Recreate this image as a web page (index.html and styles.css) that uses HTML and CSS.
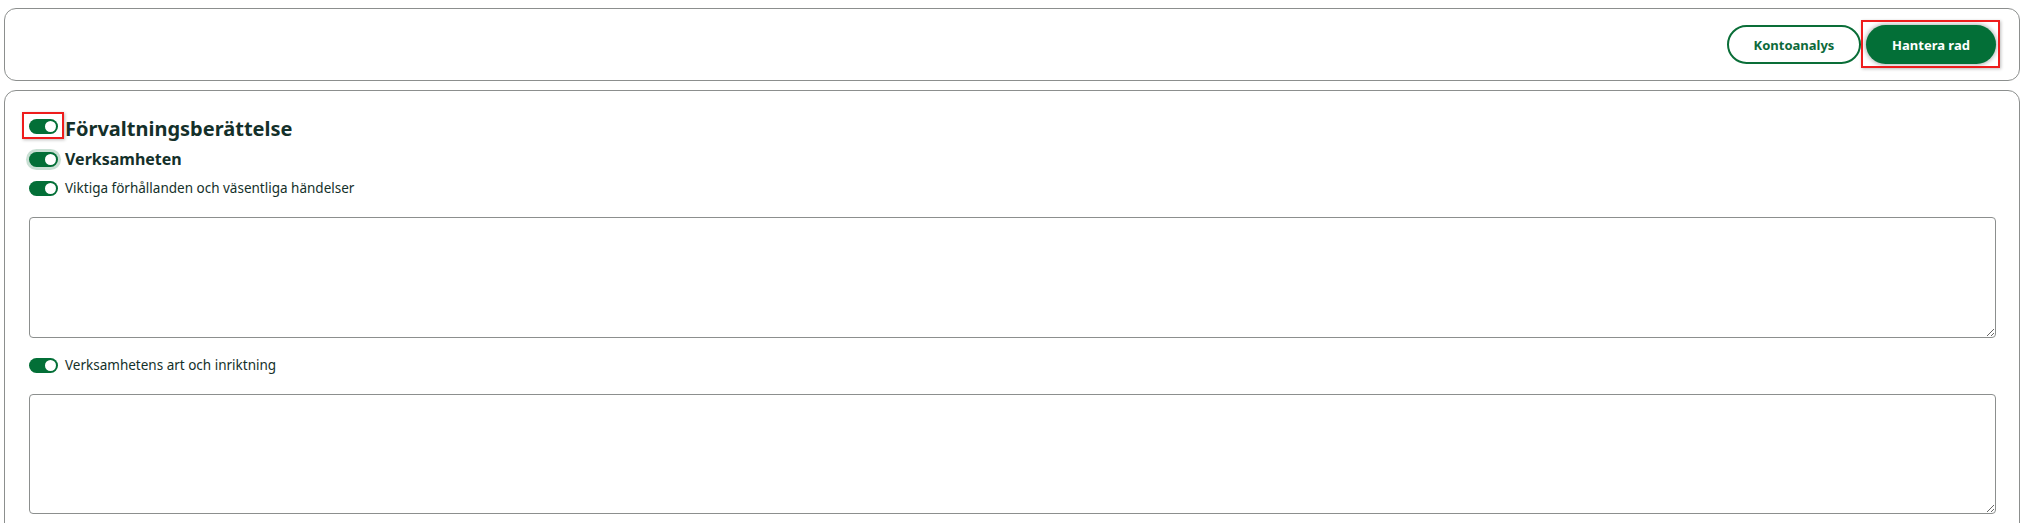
FILE: index.html
```html
<!DOCTYPE html>
<html lang="sv">
<head>
<meta charset="utf-8">
<title>Förvaltningsberättelse</title>
<link rel="stylesheet" href="styles.css">
</head>
<body>
  <div class="toolbar card">
    <button class="btn btn-outline">Kontoanalys</button>
    <button class="btn btn-primary marked-btn">Hantera rad</button>
  </div>
  <div class="content card">
    <div class="row row-h1">
      <span class="toggle marked-toggle"><span class="knob"></span></span>
      <h1 class="title">Förvaltningsberättelse</h1>
    </div>
    <div class="row row-h2">
      <span class="toggle focus"><span class="knob"></span></span>
      <h2 class="subtitle">Verksamheten</h2>
    </div>
    <div class="row row-item">
      <span class="toggle"><span class="knob"></span></span>
      <span class="label">Viktiga förhållanden och väsentliga händelser</span>
    </div>
    <textarea class="area"></textarea>
    <div class="row row-item row-gap">
      <span class="toggle"><span class="knob"></span></span>
      <span class="label">Verksamhetens art och inriktning</span>
    </div>
    <textarea class="area area-2"></textarea>
  </div>
</body>
</html>
```

FILE: styles.css
```css
* { box-sizing: border-box; }
html, body { margin: 0; background: #fff; }
body {
  padding: 8px 6px 0 4px;
  font-family: "Noto Sans", "Open Sans", sans-serif;
  color: #14302a;
  height: 523px;
  overflow: hidden;
}
.card {
  border: 1px solid #8c8f8e;
  border-radius: 12px;
  background: #fff;
}
.toolbar {
  height: 73px;
  display: flex;
  align-items: center;
  justify-content: flex-end;
  gap: 5px;
  padding-right: 23px;
}
.btn {
  height: 39px;
  border-radius: 20px;
  font-family: inherit;
  font-weight: 700;
  font-size: 13px;
  cursor: pointer;
  padding: 0;
}
.btn-outline {
  width: 134px;
  background: #fff;
  color: #0c6a3a;
  border: 2px solid #0a6e38;
}
.btn-primary {
  width: 130px;
  background: #036f37;
  color: #fff;
  border: none;
}
.marked-btn {
  position: relative;
  box-shadow: 0 0 4px 1px rgba(0,0,0,0.3);
}
.marked-btn::after {
  content: "";
  position: absolute;
  left: -5px;
  right: -4px;
  top: -5px;
  bottom: -4px;
  border: 2px solid #ee1c1c;
  box-shadow: 1px 1px 3px rgba(0,0,0,0.25);
}
.content {
  margin-top: 9px;
  height: 600px;
  padding: 22px 23px 0 24px;
}
.row {
  display: flex;
  align-items: center;
  gap: 7px;
}
.toggle {
  flex: none;
  position: relative;
  width: 29px;
  height: 15px;
  border-radius: 8px;
  background: #036f37;
  display: inline-block;
}
.knob {
  position: absolute;
  right: 2px;
  top: 2px;
  width: 11px;
  height: 11px;
  border-radius: 50%;
  background: #fff;
}
.marked-toggle::after {
  content: "";
  position: absolute;
  left: -7px;
  right: -6px;
  top: -7px;
  bottom: -5px;
  border: 2px solid #ee1c1c;
  box-shadow: 1px 1px 3px rgba(0,0,0,0.25);
}
.focus {
  box-shadow: 0 0 0 3px rgba(3,111,55,0.22);
}
.title {
  margin: 5px 0 0;
  font-size: 20px;
  font-weight: 700;
  line-height: 26px;
}
.row-h1 { height: 26px; }
.row-h2 { margin-top: 10px; height: 20px; }
.subtitle {
  margin: 0;
  font-size: 16px;
  font-weight: 700;
  line-height: 20px;
}
.row-item { margin-top: 11px; height: 17px; }
.label { font-size: 13.5px; line-height: 17px; }
.area {
  display: block;
  width: 100%;
  height: 121px;
  margin-top: 20px;
  border: 1px solid #8c8f8e;
  border-radius: 4px;
  resize: vertical;
  font-family: inherit;
}
.row-gap { margin-top: 19px; }
.area-2 { height: 120px; }
```
